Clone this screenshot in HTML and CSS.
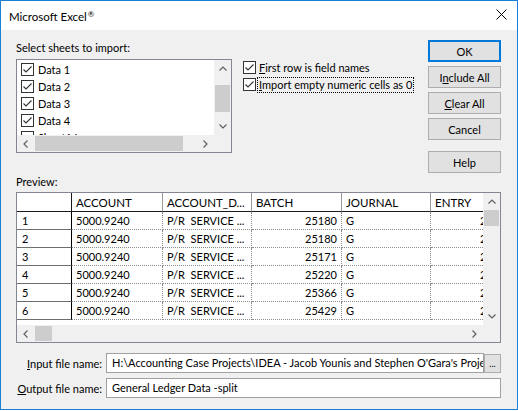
FILE: index.html
```html
<!DOCTYPE html>
<html>
<head>
<meta charset="utf-8">
<link rel="stylesheet" href="styles.css">
</head>
<body>
<div class="window">
  <div class="titlebar">
    <span class="title">Microsoft Excel<span class="reg">®</span></span>
    <svg class="close" width="11" height="11" viewBox="0 0 11 11"><path d="M0.5 0.5L10.5 10.5M10.5 0.5L0.5 10.5" stroke="#000" stroke-width="1"/></svg>
  </div>
  <div class="content">
    <div class="top">
      <div class="sheets">
        <div class="label">Select sheets to import:</div>
        <div class="listbox">
          <div class="lb-items">
            <div class="lb-row"><span class="cb"><svg width="11" height="11" viewBox="0 0 11 11"><path d="M1.5 5.5L4 8L9.5 2.5" fill="none" stroke="#333" stroke-width="1.1"/></svg></span><span>Data 1</span></div>
            <div class="lb-row"><span class="cb"><svg width="11" height="11" viewBox="0 0 11 11"><path d="M1.5 5.5L4 8L9.5 2.5" fill="none" stroke="#333" stroke-width="1.1"/></svg></span><span>Data 2</span></div>
            <div class="lb-row"><span class="cb"><svg width="11" height="11" viewBox="0 0 11 11"><path d="M1.5 5.5L4 8L9.5 2.5" fill="none" stroke="#333" stroke-width="1.1"/></svg></span><span>Data 3</span></div>
            <div class="lb-row"><span class="cb"><svg width="11" height="11" viewBox="0 0 11 11"><path d="M1.5 5.5L4 8L9.5 2.5" fill="none" stroke="#333" stroke-width="1.1"/></svg></span><span>Data 4</span></div>
            <div class="lb-row"><span class="cb"></span><span>Sheet16</span></div>
          </div>
          <div class="vscroll">
            <div class="sb-btn"><svg width="8" height="5" viewBox="0 0 8 5"><path d="M0.5 4.5L4 1L7.5 4.5" fill="none" stroke="#606060" stroke-width="1.2"/></svg></div>
            <div class="v-track"><div class="v-thumb lb-vthumb"></div></div>
            <div class="sb-btn"><svg width="8" height="5" viewBox="0 0 8 5"><path d="M0.5 0.5L4 4L7.5 0.5" fill="none" stroke="#606060" stroke-width="1.2"/></svg></div>
          </div>
          <div class="hscroll">
            <div class="sb-btn"><svg width="5" height="8" viewBox="0 0 5 8"><path d="M4.5 0.5L1 4L4.5 7.5" fill="none" stroke="#606060" stroke-width="1.2"/></svg></div>
            <div class="h-track"><div class="h-thumb lb-hthumb"></div></div>
            <div class="sb-btn"><svg width="5" height="8" viewBox="0 0 5 8"><path d="M0.5 0.5L4 4L0.5 7.5" fill="none" stroke="#606060" stroke-width="1.2"/></svg></div>
          </div>
          <div class="corner"></div>
        </div>
      </div>
      <div class="options">
        <div class="opt"><span class="cb"><svg width="11" height="11" viewBox="0 0 11 11"><path d="M1.5 5.5L4 8L9.5 2.5" fill="none" stroke="#333" stroke-width="1.1"/></svg></span><span class="opt-text"><u>F</u>irst row is field names</span></div>
        <div class="opt"><span class="cb"><svg width="11" height="11" viewBox="0 0 11 11"><path d="M1.5 5.5L4 8L9.5 2.5" fill="none" stroke="#333" stroke-width="1.1"/></svg></span><span class="opt-text focus"><u>I</u>mport empty numeric cells as 0</span></div>
      </div>
      <div class="buttons">
        <div class="btn default">OK</div>
        <div class="btn">I<u>n</u>clude All</div>
        <div class="btn"><u>C</u>lear All</div>
        <div class="btn">Cancel</div>
        <div class="btn help">Help</div>
      </div>
    </div>
    <div class="preview-label">Preview:</div>
    <div class="grid">
      <div class="gv">
        <div class="gtable">
          <div class="hc corner-cell"></div>
          <div class="hc">ACCOUNT</div>
          <div class="hc">ACCOUNT_D...</div>
          <div class="hc">BATCH</div>
          <div class="hc">JOURNAL</div>
          <div class="hc">ENTRY</div>

          <div class="rh">1</div><div class="dc">5000.9240</div><div class="dc">P/R&nbsp; SERVICE ...</div><div class="dc num">25180</div><div class="dc">G</div><div class="dc num">21438</div>
          <div class="rh">2</div><div class="dc">5000.9240</div><div class="dc">P/R&nbsp; SERVICE ...</div><div class="dc num">25180</div><div class="dc">G</div><div class="dc num">21439</div>
          <div class="rh">3</div><div class="dc">5000.9240</div><div class="dc">P/R&nbsp; SERVICE ...</div><div class="dc num">25171</div><div class="dc">G</div><div class="dc num">21440</div>
          <div class="rh">4</div><div class="dc">5000.9240</div><div class="dc">P/R&nbsp; SERVICE ...</div><div class="dc num">25220</div><div class="dc">G</div><div class="dc num">21441</div>
          <div class="rh">5</div><div class="dc">5000.9240</div><div class="dc">P/R&nbsp; SERVICE ...</div><div class="dc num">25366</div><div class="dc">G</div><div class="dc num">21442</div>
          <div class="rh">6</div><div class="dc">5000.9240</div><div class="dc">P/R&nbsp; SERVICE ...</div><div class="dc num">25429</div><div class="dc">G</div><div class="dc num">21443</div>
        </div>
      </div>
      <div class="vscroll">
        <div class="sb-btn"><svg width="8" height="5" viewBox="0 0 8 5"><path d="M0.5 4.5L4 1L7.5 4.5" fill="none" stroke="#606060" stroke-width="1.2"/></svg></div>
        <div class="v-track"><div class="v-thumb g-vthumb"></div></div>
        <div class="sb-btn"><svg width="8" height="5" viewBox="0 0 8 5"><path d="M0.5 0.5L4 4L7.5 0.5" fill="none" stroke="#606060" stroke-width="1.2"/></svg></div>
      </div>
      <div class="hscroll">
        <div class="sb-btn"><svg width="5" height="8" viewBox="0 0 5 8"><path d="M4.5 0.5L1 4L4.5 7.5" fill="none" stroke="#606060" stroke-width="1.2"/></svg></div>
        <div class="h-track"><div class="h-thumb g-hthumb"></div></div>
        <div class="sb-btn"><svg width="5" height="8" viewBox="0 0 5 8"><path d="M0.5 0.5L4 4L0.5 7.5" fill="none" stroke="#606060" stroke-width="1.2"/></svg></div>
      </div>
      <div class="corner"></div>
    </div>
    <div class="files">
      <div class="frow">
        <div class="flabel"><u>I</u>nput file name:</div>
        <div class="field">H:\Accounting Case Projects\IDEA - Jacob Younis and Stephen O'Gara's Project Files</div>
        <div class="browse">...</div>
      </div>
      <div class="frow">
        <div class="flabel"><u>O</u>utput file name:</div>
        <div class="field">General Ledger Data -split</div>
      </div>
    </div>
  </div>
</div>
</body>
</html>
```

FILE: styles.css
```css
* { box-sizing: border-box; }
html, body { margin: 0; padding: 0; background: #ffffff; }
body { font-family: Lato, "Liberation Sans", sans-serif; font-size: 11px; color: #000; }
u { text-decoration: underline; text-underline-offset: 1px; }

.window {
  width: 518px; height: 410px;
  border: 1px solid #1c7ed6;
  background: #f0f0f0;
  display: flex; flex-direction: column;
}
.titlebar {
  height: 29px; flex: none;
  background: #fff;
  display: flex; align-items: flex-start;
  padding: 5px 10px 0 8px;
}
.title { flex: 1; line-height: 16px; font-size: 11.5px; }
.reg { font-size: 8px; vertical-align: 4px; margin-left: 1px; }
.close { margin-top: 3px; }

.content { flex: 1; padding: 10px 16px 0 15px; display: flex; flex-direction: column; }

.top { display: flex; align-items: flex-start; }
.sheets { width: 216px; flex: none; }
.label { line-height: 16px; height: 16px; }

.listbox {
  margin-top: 3px; height: 94px;
  border: 1px solid #828790; background: #fff;
  display: grid; grid-template-columns: 197px 17px; grid-template-rows: 75px 17px;
}
.lb-items { padding-top: 1px; overflow: hidden; }
.lb-row { height: 17px; display: flex; align-items: center; padding-left: 4px; gap: 4px; white-space: nowrap; }

.cb {
  width: 13px; height: 13px; flex: none;
  border: 1px solid #333; background: #fff;
  display: flex; align-items: center; justify-content: center;
}
.cb svg { display: block; }

.vscroll { background: #f0f0f0; display: flex; flex-direction: column; }
.hscroll { background: #f0f0f0; display: flex; flex-direction: row; }
.corner { background: #f0f0f0; }
.sb-btn { width: 17px; height: 17px; flex: none; display: flex; align-items: center; justify-content: center; }
.v-track { flex: 1; }
.h-track { flex: 1; display: flex; align-items: stretch; }
.v-thumb { background: #cdcdcd; margin: 0 1px; }
.h-thumb { background: #cdcdcd; margin: 1px 0; }
.lb-vthumb { margin-top: 8px; height: 27px; }
.lb-hthumb { margin-left: 1px; width: 148px; }
.g-vthumb { margin-top: 0; height: 16px; }
.g-hthumb { margin-left: 1px; width: 17px; }

.options { margin-left: 11px; padding-top: 19px; }
.opt { height: 17px; display: flex; align-items: center; gap: 2px; white-space: nowrap; }
.opt-text { padding: 0 1px; line-height: 14px; }
.focus { outline: 1px dotted #000; }

.buttons { margin-left: auto; width: 73px; display: flex; flex-direction: column; }
.btn {
  height: 22px; margin-bottom: 4px;
  border: 1px solid #adadad; background: #e1e1e1;
  display: flex; align-items: center; justify-content: center;
  white-space: nowrap;
}
.btn.default { border-color: #0078d7; box-shadow: inset 0 0 0 1px #0078d7; }
.btn.help { margin-top: 7px; margin-bottom: 0; }

.preview-label { margin-top: 1px; line-height: 16px; height: 16px; }

.grid {
  margin-top: 2px; height: 151px;
  border: 1px solid #828790; background: #fff;
  display: grid; grid-template-columns: 466px 17px; grid-template-rows: 132px 17px;
}
.gv { overflow: hidden; background: #fff; }
.gtable {
  display: grid;
  grid-template-columns: 55px 91px 89px 90px 89px 86px;
  grid-template-rows: 19px repeat(6, 18px);
  width: 500px;
}
.hc, .rh, .dc { display: flex; align-items: center; white-space: nowrap; overflow: hidden; }
.hc { padding-left: 4px; border-right: 1px solid #9a9a9a; border-bottom: 1px solid #1a1a1a; background: #fff; font-size: 11.5px; }
.hc.corner-cell { border-right: 1px solid #1a1a1a; }
.rh { padding-left: 5px; border-right: 1px solid #000; border-bottom: 1px solid #6e6e6e; background: #fff; }
.dc { padding-left: 4px; border-right: 1px dotted #8c8c8c; border-bottom: 1px dotted #8c8c8c; }
.dc.num { justify-content: flex-end; padding-left: 0; padding-right: 4px; }

.files { margin-top: 10px; display: flex; flex-direction: column; gap: 5px; }
.frow { display: flex; align-items: center; height: 20px; }
.flabel { width: 90px; flex: none; text-align: right; padding-right: 4px; white-space: nowrap; }
.field {
  flex: 1; height: 20px; min-width: 0;
  border: 1px solid #a0a0a0; background: #fff;
  padding-left: 5px; line-height: 18px;
  white-space: nowrap; overflow: hidden;
}
.browse {
  width: 17px; height: 19px; flex: none;
  border: 1px solid #adadad; background: #e1e1e1;
  font-size: 9px; line-height: 9px; text-align: center;
  display: flex; align-items: flex-end; justify-content: center; padding-bottom: 4px;
}
```
